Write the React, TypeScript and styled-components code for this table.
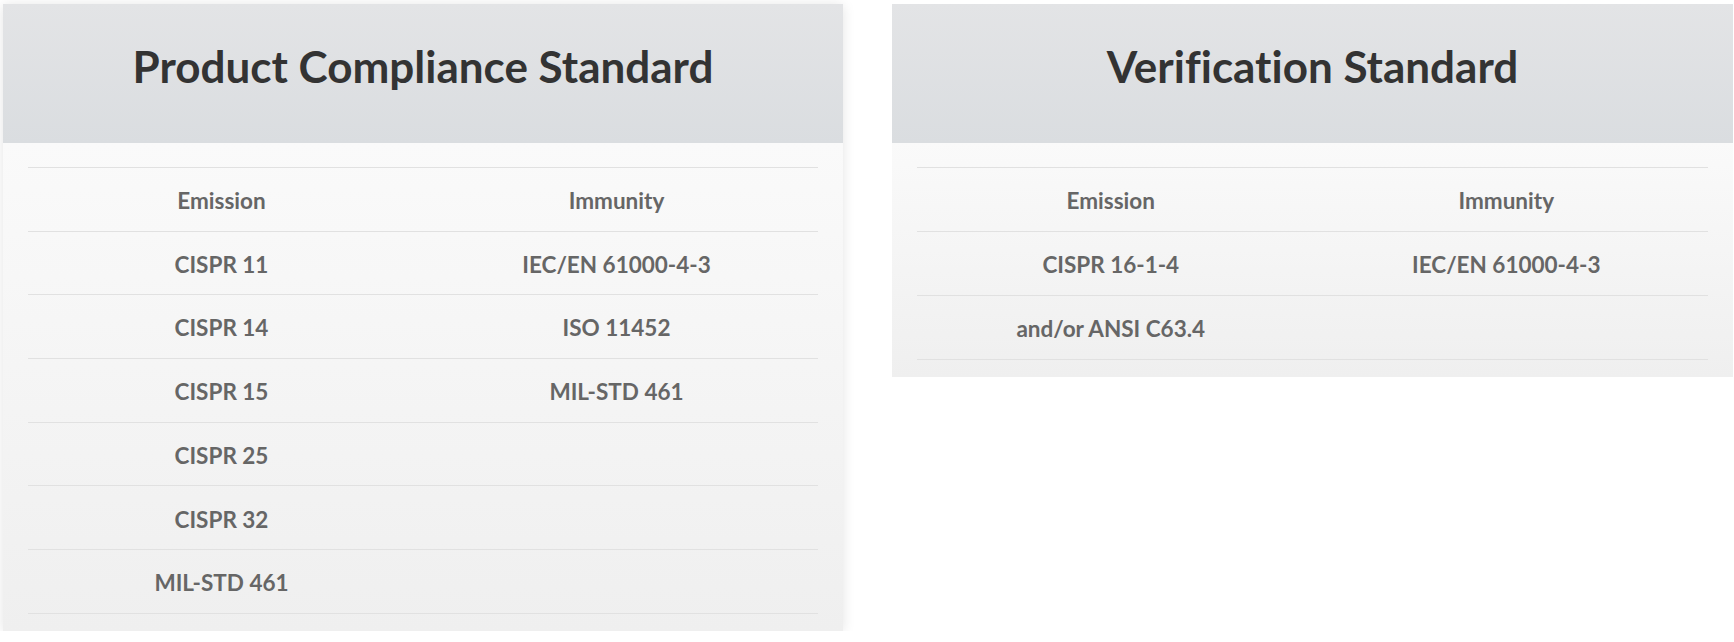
import React from "react";
import styled, { createGlobalStyle } from "styled-components";

const GlobalStyle = createGlobalStyle`
  html, body {
    margin: 0;
    padding: 0;
    background: #ffffff;
  }
  body {
    font-family: Lato, "Open Sans", "Noto Sans", sans-serif;
  }
`;

const Page = styled.div`
  display: flex;
  align-items: flex-start;
  gap: 49px;
  padding: 4px 1px 0 3px;
`;

const Card = styled.section<{ $width: number; $raised?: boolean }>`
  width: ${(p) => p.$width}px;
  flex: none;
  display: flex;
  flex-direction: column;
  box-shadow: ${(p) => (p.$raised ? "0 1px 12px rgba(0, 0, 0, 0.11)" : "none")};
`;

const Header = styled.header`
  height: 139px;
  display: flex;
  justify-content: center;
  align-items: flex-start;
  padding-top: 40px;
  box-sizing: border-box;
  background: linear-gradient(to bottom, #e3e4e6 0%, #dadde0 100%);
`;

const Title = styled.h2`
  margin: 0;
  font-family: Lato, "Open Sans", sans-serif;
  font-weight: 700;
  font-size: 44px;
  line-height: 1;
  color: #333333;
  font-variant-ligatures: none;
`;

const Body = styled.div`
  padding: 24px 25px 17px 25px;
  background: linear-gradient(to bottom, #fafafa 0%, #efefef 100%);
`;

const Table = styled.div`
  display: flex;
  flex-direction: column;
  border-top: 1px solid #e1e1e1;
`;

const Row = styled.div<{ $height: number }>`
  display: grid;
  grid-template-columns: 1fr 1fr;
  height: ${(p) => p.$height}px;
  box-sizing: border-box;
  border-bottom: 1px solid #e1e1e1;
  align-items: center;
`;

const Cell = styled.div`
  text-align: center;
  padding: 4px 8px 0 0;
  font-family: Lato, "Open Sans", sans-serif;
  font-weight: 700;
  font-size: 22.5px;
  color: #666666;
  line-height: 1;
  font-variant-ligatures: none;
`;

type Standard = {
  title: string;
  width: number;
  raised?: boolean;
  rowHeight: number;
  rows: [string, string][];
};

const standards: Standard[] = [
  {
    title: "Product Compliance Standard",
    width: 840,
    raised: true,
    rowHeight: 63.7,
    rows: [
      ["Emission", "Immunity"],
      ["CISPR 11", "IEC/EN 61000-4-3"],
      ["CISPR 14", "ISO 11452"],
      ["CISPR 15", "MIL-STD 461"],
      ["CISPR 25", ""],
      ["CISPR 32", ""],
      ["MIL-STD 461", ""],
    ],
  },
  {
    title: "Verification Standard",
    width: 841,
    rowHeight: 64,
    rows: [
      ["Emission", "Immunity"],
      ["CISPR 16-1-4", "IEC/EN 61000-4-3"],
      ["and/or ANSI C63.4", ""],
    ],
  },
];

export default function App() {
  return (
    <>
      <GlobalStyle />
      <Page>
        {standards.map((s) => (
          <Card key={s.title} $width={s.width} $raised={s.raised}>
            <Header>
              <Title>{s.title}</Title>
            </Header>
            <Body>
              <Table>
                {s.rows.map((r, i) => (
                  <Row key={i} $height={s.rowHeight}>
                    <Cell>{r[0]}</Cell>
                    <Cell>{r[1]}</Cell>
                  </Row>
                ))}
              </Table>
            </Body>
          </Card>
        ))}
      </Page>
    </>
  );
}
